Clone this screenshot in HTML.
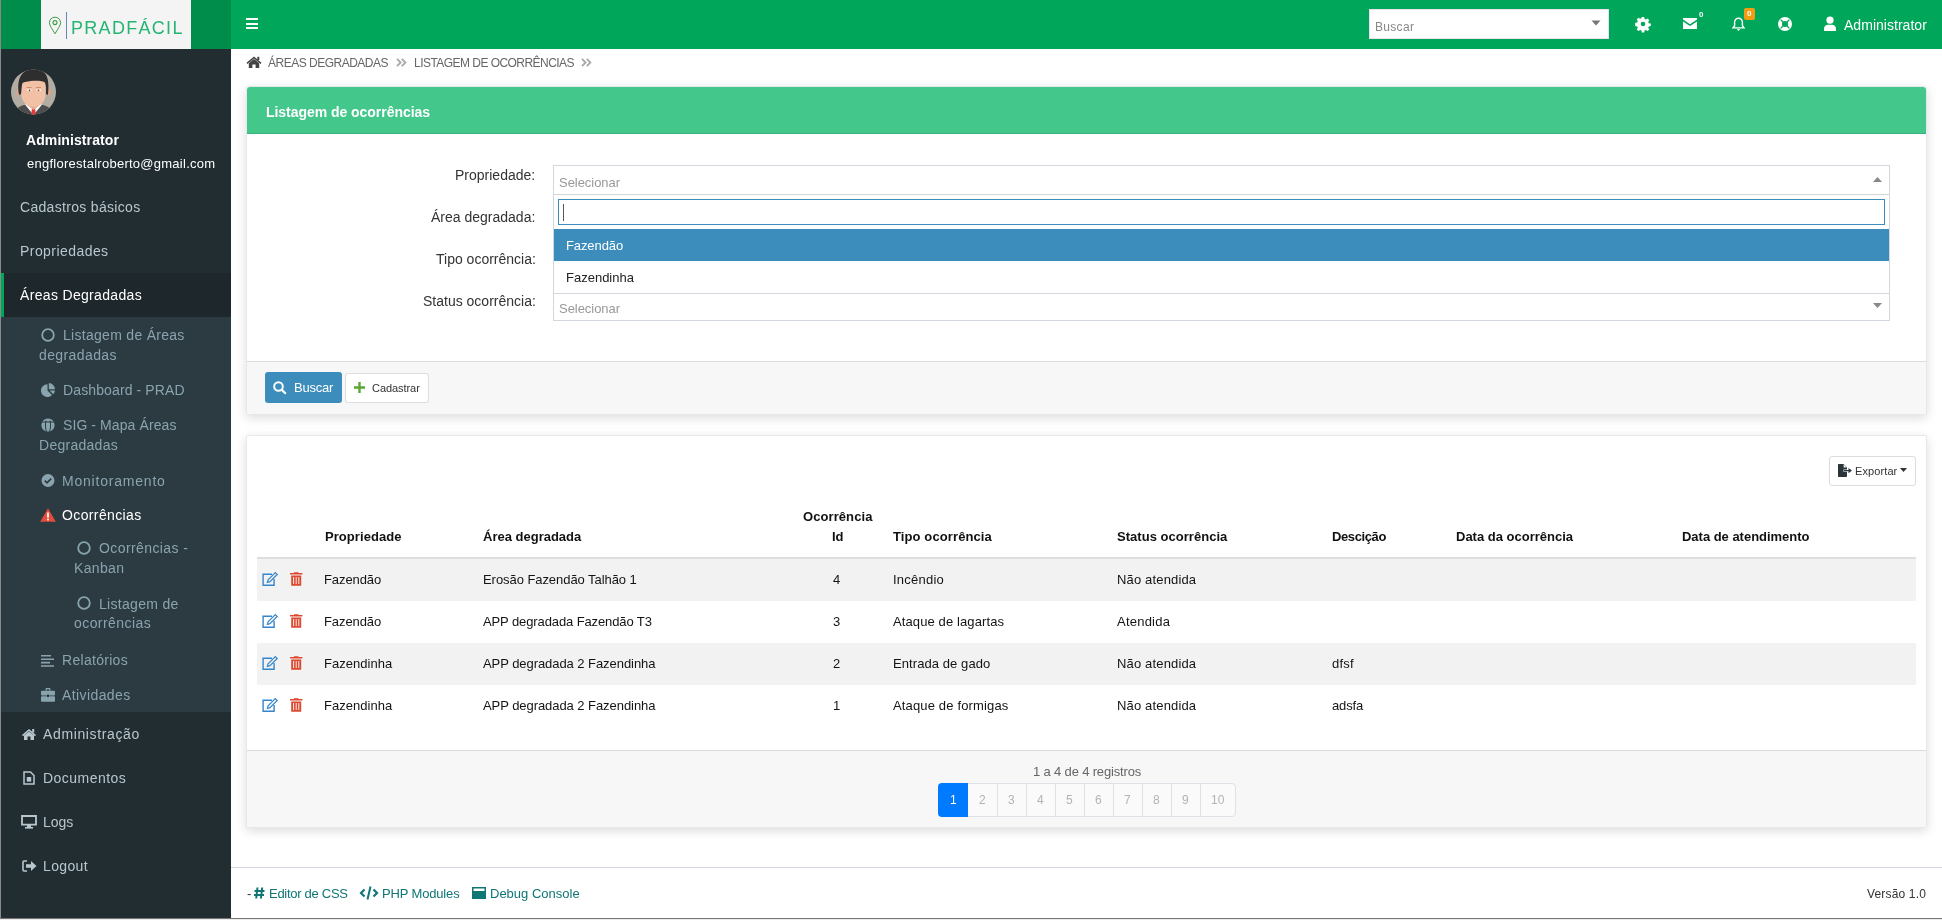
<!DOCTYPE html>
<html><head><meta charset="utf-8">
<style>
*{box-sizing:border-box;margin:0;padding:0}
html,body{width:1942px;height:920px;overflow:hidden;background:#fff;font-family:"Liberation Sans",sans-serif;position:relative}
.a{position:absolute;white-space:nowrap;line-height:1;will-change:transform}
.r{position:absolute}
svg{position:absolute;overflow:visible}
</style></head><body>
<!-- header -->
<div class="r" style="left:1px;top:0;width:230px;height:49px;background:#008d4c"></div>
<div class="r" style="left:41px;top:0;width:150px;height:49px;background:#f4f4f4"></div>
<div class="r" style="left:231px;top:0;width:1711px;height:49px;background:#00a65a"></div>
<!-- logo -->
<svg style="left:48px;top:16px" width="14" height="19" viewBox="0 0 14 19"><path d="M7 1.2C3.8 1.2 1.4 3.6 1.4 6.6c0 3.2 3 6.4 5.6 11.2C9.6 13 12.6 9.8 12.6 6.6 12.6 3.6 10.2 1.2 7 1.2z" fill="none" stroke="#3d9e45" stroke-width="1"/><circle cx="7" cy="6.6" r="2" fill="none" stroke="#3d9e45" stroke-width="1.1"/></svg>
<div class="r" style="left:65.5px;top:12px;width:1px;height:27px;background:#6a86b4"></div>
<div class="a" style="left:71px;top:18.5px;font-size:18px;letter-spacing:1.3px;color:#25b472">PRADFÁCIL</div>
<!-- hamburger -->
<div class="r" style="left:246px;top:18px;width:12px;height:2px;background:#fff"></div>
<div class="r" style="left:246px;top:23px;width:12px;height:2px;background:#fff"></div>
<div class="r" style="left:246px;top:27px;width:12px;height:2px;background:#fff"></div>
<!-- search -->
<div class="r" style="left:1369px;top:9px;width:240px;height:30px;background:#fff;border:1px solid #e8e0ee"></div>
<svg style="left:1591px;top:20px" width="10" height="6" viewBox="0 0 10 6"><path d="M0.5 0.5h9L5 5.5z" fill="#777"/></svg>
<!-- header icons -->
<svg style="left:1636px;top:17px" width="14" height="14" viewBox="0 0 14 14"><path fill="#fff" d="M5.8 0h2.4l.4 2 1.3.6 1.7-1.1 1.7 1.7-1.1 1.7.6 1.3 2 .4v2.4l-2 .4-.6 1.3 1.1 1.7-1.7 1.7-1.7-1.1-1.3.6-.4 2H5.8l-.4-2-1.3-.6-1.7 1.1-1.7-1.7 1.1-1.7-.6-1.3-2-.4V5.8l2-.4.6-1.3-1.1-1.7 1.7-1.7 1.7 1.1 1.3-.6z"/><circle cx="7" cy="7" r="2.3" fill="#00a65a"/></svg>
<svg style="left:1683px;top:18px" width="14" height="11" viewBox="0 0 14 11"><path fill="#fff" d="M0 0h14v1.6L7 6.2 0 1.6z"/><path fill="#fff" d="M0 3.4l7 4.6 7-4.6V11H0z"/></svg>
<div class="a" style="left:1699px;top:11px;font-size:8px;color:#fff;font-weight:700">0</div>
<svg style="left:1732px;top:17px" width="13" height="14" viewBox="0 0 13 14"><path fill="none" stroke="#fff" stroke-width="1.4" d="M6.5 1.2c-2.4 0-3.9 1.9-3.9 4.2v3.3L1 10.9h11L10.4 8.7V5.4c0-2.3-1.5-4.2-3.9-4.2z"/><path fill="#fff" d="M4.8 12h3.4l-1.7 2z"/></svg>
<div class="r" style="left:1744px;top:8px;width:11px;height:12px;background:#f39c12;border-radius:2px"></div>
<div class="a" style="left:1747px;top:10px;font-size:8px;color:#fff;font-weight:700">0</div>
<svg style="left:1778px;top:17px" width="14" height="14" viewBox="0 0 14 14"><circle cx="7" cy="7" r="7" fill="#fff"/><circle cx="7" cy="7" r="3" fill="#00a65a"/><path d="M2.6 2.6l2.6 2.6M11.4 2.6L8.8 5.2M2.6 11.4l2.6-2.6M11.4 11.4L8.8 8.8" stroke="#00a65a" stroke-width="1.3"/></svg>
<svg style="left:1823px;top:16px" width="14" height="15" viewBox="0 0 14 15"><circle cx="7" cy="4.2" r="3.6" fill="#fff"/><path fill="#fff" d="M1 15v-2.5C1 10.3 3 8.8 5 8.8h4c2 0 4 1.5 4 3.7V15z"/></svg>

<!-- sidebar -->
<div class="r" style="left:1px;top:49px;width:230px;height:869px;background:#222d32"></div>
<div class="r" style="left:1px;top:273px;width:230px;height:44px;background:#1e282c"></div>
<div class="r" style="left:1px;top:273px;width:3px;height:44px;background:#00a65a"></div>
<div class="r" style="left:1px;top:317px;width:230px;height:395px;background:#2c3b41"></div>
<!-- avatar -->
<svg style="left:11px;top:69px" width="45" height="46" viewBox="0 0 45 46">
<defs><clipPath id="av"><circle cx="22.5" cy="23" r="22.5"/></clipPath></defs>
<g clip-path="url(#av)">
<rect width="45" height="46" fill="#b3aca3"/>
<path d="M3 46c1-6 5-9 10-10h19c5 1 9 4 10 10z" fill="#4d4d4d"/>
<path d="M14 35.5h17l-8.5 10.5z" fill="#fff"/>
<path d="M20.8 40h3.4l.6 6h-4.6z" fill="#e53935"/>
<path d="M16 30v6l6.5 5 6.5-5v-6z" fill="#e3a98c"/>
<ellipse cx="7.8" cy="23" rx="2" ry="3.4" fill="#e8a888"/><ellipse cx="37.2" cy="23" rx="2" ry="3.4" fill="#e8a888"/>
<path d="M10.5 16c0-6 5-8.5 12-8.5s12 2.5 12 8.5v10c0 7-6 12-12 12s-12-5-12-12z" fill="#f2c0a4"/>
<path d="M8 26c-1.5-9-1-17 4-22 3-3 7-4 11-4 5 0 9 1.5 11.5 5 3 4 3.5 12 2.5 21l-2-1c0-5 .5-9-1.5-12-4-1.5-9-1.5-14-1-3 .5-6 1-8 2-1 3-1 7-1.5 11z" fill="#2e2e2e"/>
<path d="M15.5 18.5h5M25 18.5h5" stroke="#d08a6a" stroke-width="1"/>
<path d="M16 21.3h4.5M25.5 21.3h4.5" stroke="#fff" stroke-width="1.6"/>
<circle cx="18.5" cy="21.3" r="0.9" fill="#6a4a30"/><circle cx="27.5" cy="21.3" r="0.9" fill="#6a4a30"/>
</g></svg>
<!-- sidebar icons -->
<svg style="left:41px;top:328px" width="14" height="14" viewBox="0 0 14 14"><circle cx="7" cy="7" r="5.8" fill="none" stroke="#8aa4af" stroke-width="1.8"/></svg>
<svg style="left:41px;top:383px" width="15" height="14" viewBox="0 0 15 14"><path fill="#8aa4af" d="M6.5 7.5V1.2A6.4 6.4 0 1 0 11 12z"/><path fill="#8aa4af" d="M7.8 6.3V0A6.4 6.4 0 0 1 14 6.3z"/><path fill="#8aa4af" d="M8.6 7.6H14a6.4 6.4 0 0 1-1.7 3.7z"/></svg>
<svg style="left:41px;top:418px" width="14" height="14" viewBox="0 0 14 14"><circle cx="7" cy="7" r="6.6" fill="#8aa4af"/><path d="M1 4h12M5 2.5c-.8 3-.8 8 .5 11M9 2.5c.8 3 .8 8-.5 11" stroke="#2c3b41" stroke-width="1" fill="none"/></svg>
<svg style="left:41px;top:474px" width="14" height="13" viewBox="0 0 14 13"><circle cx="7" cy="6.5" r="6.5" fill="#8aa4af"/><path d="M3.8 6.6l2.2 2.2 4.2-4.2" stroke="#2c3b41" stroke-width="1.7" fill="none"/></svg>
<svg style="left:40px;top:508px" width="16" height="14" viewBox="0 0 16 14"><path fill="#e74c3c" d="M8 0.3L15.8 13.7H0.2z"/><rect x="7.1" y="4.5" width="1.8" height="5" fill="#fff"/><rect x="7.1" y="10.6" width="1.8" height="1.8" fill="#fff"/></svg>
<svg style="left:77px;top:541px" width="14" height="14" viewBox="0 0 14 14"><circle cx="7" cy="7" r="5.8" fill="none" stroke="#8aa4af" stroke-width="1.8"/></svg>
<svg style="left:77px;top:596px" width="14" height="14" viewBox="0 0 14 14"><circle cx="7" cy="7" r="5.8" fill="none" stroke="#8aa4af" stroke-width="1.8"/></svg>
<svg style="left:41px;top:655px" width="14" height="12" viewBox="0 0 14 12"><path fill="#8aa4af" d="M0 0h10v1.6H0zM0 3.4h13v1.6H0zM0 6.8h9v1.6H0zM0 10.2h13v1.6H0z"/></svg>
<svg style="left:41px;top:688px" width="14" height="14" viewBox="0 0 14 14"><path fill="#8aa4af" d="M4.5 2.5V1.2C4.5.6 5 0 5.6 0h2.8c.6 0 1.1.6 1.1 1.2v1.3h-1.3V1.3H5.8v1.2z"/><rect x="0" y="2.8" width="14" height="4.6" rx="1" fill="#8aa4af"/><rect x="0" y="8.2" width="14" height="5.6" rx="1" fill="#8aa4af"/><rect x="6" y="6.6" width="2" height="2.4" fill="#2c3b41"/></svg>
<svg style="left:21px;top:728px" width="16" height="12" viewBox="0 0 16 12"><path fill="#b8c7ce" d="M8 1L1 7l1 1.2L8 3l6 5.2L15 7z"/><path fill="#b8c7ce" d="M3 7.5L8 3.4l5 4.1V12H9.5V8.5h-3V12H3z"/><rect x="11.2" y="1" width="2" height="3.5" fill="#b8c7ce"/></svg>
<svg style="left:23px;top:771px" width="12" height="14" viewBox="0 0 12 14"><path fill="none" stroke="#b8c7ce" stroke-width="1.5" d="M1 1h6.5L11 4.5V13H1z"/><rect x="3.8" y="6" width="4.4" height="4.6" fill="#b8c7ce"/></svg>
<svg style="left:21px;top:815px" width="16" height="14" viewBox="0 0 16 14"><path fill="none" stroke="#b8c7ce" stroke-width="1.8" d="M1 1h14v8.6H1z"/><rect x="6" y="10" width="4" height="2" fill="#b8c7ce"/><rect x="4" y="12" width="8" height="1.6" fill="#b8c7ce"/></svg>
<svg style="left:22px;top:860px" width="15" height="12" viewBox="0 0 15 12"><path fill="none" stroke="#b8c7ce" stroke-width="1.6" d="M5 1H2C1.4 1 1 1.4 1 2v8c0 .6.4 1 1 1h3"/><path fill="#b8c7ce" d="M4 4.3h5V1l5.5 5L9 11V7.7H4z"/></svg>

<!-- breadcrumb -->
<svg style="left:246px;top:56px" width="16" height="12" viewBox="0 0 16 12"><path fill="#444" d="M8 0.5L0.5 6.8l1 1.1L8 2.4l6.5 5.5 1-1.1z"/><path fill="#444" d="M2.8 7.2L8 2.9l5.2 4.3V12H9.6V8.6H6.4V12H2.8z"/><rect x="11.3" y="0.8" width="2" height="3.2" fill="#444"/></svg>
<svg style="left:396px;top:58px" width="11" height="9" viewBox="0 0 11 9"><path d="M1 0.8l3.6 3.7L1 8.2M5.8 0.8l3.6 3.7-3.6 3.7" fill="none" stroke="#aaa" stroke-width="1.9"/></svg>
<svg style="left:581px;top:58px" width="11" height="9" viewBox="0 0 11 9"><path d="M1 0.8l3.6 3.7L1 8.2M5.8 0.8l3.6 3.7-3.6 3.7" fill="none" stroke="#aaa" stroke-width="1.9"/></svg>

<!-- box 1 -->
<div class="r" style="left:246px;top:86px;width:1681px;height:329px;background:#fff;border:1px solid #e8e8e8;border-radius:2px;box-shadow:0 3px 11px rgba(0,0,0,.14)"></div>
<div class="r" style="left:247px;top:87px;width:1679px;height:47px;background:#43c78b;border-bottom:1px solid #39b27b;border-radius:3px 3px 0 0"></div>
<div class="r" style="left:247px;top:361px;width:1679px;height:53px;background:#f7f7f7;border-top:1px solid #dcdcdc;border-radius:0 0 3px 3px"></div>
<!-- select 1 + dropdown -->
<div class="r" style="left:553px;top:165px;width:1337px;height:30px;background:#fff;border:1px solid #d2d6de"></div>
<svg style="left:1873px;top:177px" width="9" height="5" viewBox="0 0 9 5"><path d="M0 5h9L4.5 0z" fill="#888"/></svg>
<div class="r" style="left:553px;top:194px;width:1337px;height:100px;background:#fff;border:1px solid #d2d6de"></div>
<div class="r" style="left:558px;top:199px;width:1327px;height:26px;background:#fff;border:1px solid #3c8dbc"></div>
<div class="r" style="left:563px;top:204px;width:1px;height:17px;background:#555"></div>
<div class="r" style="left:554px;top:229px;width:1335px;height:32px;background:#3d8dbc"></div>
<!-- select 4 -->
<div class="r" style="left:553px;top:293px;width:1337px;height:28px;background:#fff;border:1px solid #d2d6de"></div>
<svg style="left:1873px;top:303px" width="9" height="5" viewBox="0 0 9 5"><path d="M0 0h9L4.5 5z" fill="#888"/></svg>
<!-- buttons -->
<div class="r" style="left:265px;top:372px;width:77px;height:31px;background:#3c8dbc;border-radius:3px"></div>
<svg style="left:273px;top:381px" width="14" height="14" viewBox="0 0 14 14"><circle cx="5.5" cy="5.5" r="4.3" fill="none" stroke="#fff" stroke-width="2"/><path d="M8.6 8.6l4.2 4.2" stroke="#fff" stroke-width="2.2"/></svg>
<div class="r" style="left:345px;top:373px;width:84px;height:30px;background:#fff;border:1px solid #ddd;border-radius:3px"></div>
<svg style="left:354px;top:382px" width="11" height="11" viewBox="0 0 11 11"><path d="M4.3 0h2.4v4.3H11v2.4H6.7V11H4.3V6.7H0V4.3h4.3z" fill="#5aa832"/></svg>

<!-- box 2 -->
<div class="r" style="left:246px;top:435px;width:1681px;height:393px;background:#fff;border:1px solid #e8e8e8;border-radius:2px;box-shadow:0 3px 11px rgba(0,0,0,.14)"></div>
<div class="r" style="left:247px;top:750px;width:1679px;height:77px;background:#f7f7f7;border-top:1px solid #dcdcdc;border-radius:0 0 3px 3px"></div>
<div class="r" style="left:1829px;top:456px;width:87px;height:30px;background:#fff;border:1px solid #ddd;border-radius:3px"></div>
<svg style="left:1838px;top:464px" width="14" height="13" viewBox="0 0 14 13"><path fill="#2b3438" d="M0 1c0-.6.4-1 1-1h4.5L9 3.5V5.5H5.5v2.2H9V12c0 .6-.4 1-1 1H1c-.6 0-1-.4-1-1z"/><path fill="#fff" d="M5.6 0.4V3.4h3"/><path fill="#2b3438" d="M6 6h4.5V4L14 6.6 10.5 9.2V7.2H6z"/></svg>
<svg style="left:1900px;top:468px" width="7" height="4" viewBox="0 0 7 4"><path d="M0 0h7L3.5 4z" fill="#333"/></svg>
<!-- table -->
<div class="r" style="left:257px;top:557px;width:1659px;height:2px;background:#dedede"></div>
<div class="r" style="left:257px;top:559px;width:1659px;height:42px;background:#f2f2f2"></div>
<div class="r" style="left:257px;top:643px;width:1659px;height:42px;background:#f2f2f2"></div>
<!-- row icons -->
<svg style="left:262px;top:572px" width="16" height="14" viewBox="0 0 16 14"><path d="M10 2.2H1.1v11h11V7" fill="none" stroke="#3585cc" stroke-width="1.4"/><path d="M13.3.6l1.9 1.9-7.2 7.2-2.6.7.7-2.6z" fill="none" stroke="#3585cc" stroke-width="1.2"/></svg>
<svg style="left:290px;top:572px" width="13" height="14" viewBox="0 0 13 14"><path fill="#db4a30" d="M0 1.1h12.4v1.3H0zM3.9 0.2h4.6v1.4H3.9zM1.2 3.5h10v10.3h-10z"/><path d="M3.6 5v7M6.2 5v7M8.8 5v7" stroke="#fff" stroke-width="0.9"/></svg>
<svg style="left:262px;top:614px" width="16" height="14" viewBox="0 0 16 14"><path d="M10 2.2H1.1v11h11V7" fill="none" stroke="#3585cc" stroke-width="1.4"/><path d="M13.3.6l1.9 1.9-7.2 7.2-2.6.7.7-2.6z" fill="none" stroke="#3585cc" stroke-width="1.2"/></svg>
<svg style="left:290px;top:614px" width="13" height="14" viewBox="0 0 13 14"><path fill="#db4a30" d="M0 1.1h12.4v1.3H0zM3.9 0.2h4.6v1.4H3.9zM1.2 3.5h10v10.3h-10z"/><path d="M3.6 5v7M6.2 5v7M8.8 5v7" stroke="#fff" stroke-width="0.9"/></svg>
<svg style="left:262px;top:656px" width="16" height="14" viewBox="0 0 16 14"><path d="M10 2.2H1.1v11h11V7" fill="none" stroke="#3585cc" stroke-width="1.4"/><path d="M13.3.6l1.9 1.9-7.2 7.2-2.6.7.7-2.6z" fill="none" stroke="#3585cc" stroke-width="1.2"/></svg>
<svg style="left:290px;top:656px" width="13" height="14" viewBox="0 0 13 14"><path fill="#db4a30" d="M0 1.1h12.4v1.3H0zM3.9 0.2h4.6v1.4H3.9zM1.2 3.5h10v10.3h-10z"/><path d="M3.6 5v7M6.2 5v7M8.8 5v7" stroke="#fff" stroke-width="0.9"/></svg>
<svg style="left:262px;top:698px" width="16" height="14" viewBox="0 0 16 14"><path d="M10 2.2H1.1v11h11V7" fill="none" stroke="#3585cc" stroke-width="1.4"/><path d="M13.3.6l1.9 1.9-7.2 7.2-2.6.7.7-2.6z" fill="none" stroke="#3585cc" stroke-width="1.2"/></svg>
<svg style="left:290px;top:698px" width="13" height="14" viewBox="0 0 13 14"><path fill="#db4a30" d="M0 1.1h12.4v1.3H0zM3.9 0.2h4.6v1.4H3.9zM1.2 3.5h10v10.3h-10z"/><path d="M3.6 5v7M6.2 5v7M8.8 5v7" stroke="#fff" stroke-width="0.9"/></svg>
<!-- pagination -->
<div class="r" style="left:938px;top:783px;width:298px;height:34px;background:#fafafa;border:1px solid #dee2e6;border-radius:4px"></div>
<div class="r" style="left:938px;top:783px;width:30px;height:34px;background:#007bff;border-radius:4px 0 0 4px"></div>
<div class="r" style="left:996.5px;top:784px;width:1px;height:32px;background:#dee2e6"></div><div class="r" style="left:1025.5px;top:784px;width:1px;height:32px;background:#dee2e6"></div><div class="r" style="left:1054.5px;top:784px;width:1px;height:32px;background:#dee2e6"></div><div class="r" style="left:1083.5px;top:784px;width:1px;height:32px;background:#dee2e6"></div><div class="r" style="left:1112.5px;top:784px;width:1px;height:32px;background:#dee2e6"></div><div class="r" style="left:1141.5px;top:784px;width:1px;height:32px;background:#dee2e6"></div><div class="r" style="left:1170.5px;top:784px;width:1px;height:32px;background:#dee2e6"></div><div class="r" style="left:1199.5px;top:784px;width:1px;height:32px;background:#dee2e6"></div>

<!-- footer -->
<div class="r" style="left:231px;top:867px;width:1711px;height:1px;background:#d2d6de"></div>
<svg style="left:254px;top:887px" width="11" height="12" viewBox="0 0 11 12"><path d="M3.5 0.5L2.2 11.5M8.2 0.5L6.9 11.5M0.5 4h10M0 8h10" stroke="#107575" stroke-width="2"/></svg>
<svg style="left:360px;top:886px" width="18" height="14" viewBox="0 0 18 14"><path d="M4.5 3.5L1 7l3.5 3.5M13.5 3.5L17 7l-3.5 3.5" fill="none" stroke="#107575" stroke-width="2.2"/><path d="M10.5 0.5L7.5 13.5" stroke="#107575" stroke-width="2"/></svg>
<svg style="left:472px;top:887px" width="14" height="12" viewBox="0 0 14 12"><rect x="0" y="0" width="14" height="12" fill="#107575"/><rect x="1.5" y="1.5" width="11" height="2.5" fill="#fff"/></svg>

<div class="a" style="left:26.0px;top:133.1px;font-size:14px;color:#fff;font-weight:700;letter-spacing:0.09px;">Administrator</div>
<div class="a" style="left:26.5px;top:157.0px;font-size:13px;color:#fff;letter-spacing:0.26px;">engflorestalroberto@gmail.com</div>
<div class="a" style="left:19.5px;top:200.1px;font-size:14px;color:#b8c7ce;letter-spacing:0.31px;">Cadastros básicos</div>
<div class="a" style="left:19.5px;top:243.5px;font-size:14px;color:#b8c7ce;letter-spacing:0.44px;">Propriedades</div>
<div class="a" style="left:19.5px;top:288.1px;font-size:14px;color:#fff;letter-spacing:0.33px;">Áreas Degradadas</div>
<div class="a" style="left:62.6px;top:328.1px;font-size:14px;color:#8aa4af;letter-spacing:0.29px;">Listagem de Áreas</div>
<div class="a" style="left:39.0px;top:348.1px;font-size:14px;color:#8aa4af;letter-spacing:0.40px;">degradadas</div>
<div class="a" style="left:62.6px;top:382.7px;font-size:14px;color:#8aa4af;letter-spacing:0.12px;">Dashboard - PRAD</div>
<div class="a" style="left:62.6px;top:417.9px;font-size:14px;color:#8aa4af;letter-spacing:0.09px;">SIG - Mapa Áreas</div>
<div class="a" style="left:39.0px;top:437.9px;font-size:14px;color:#8aa4af;letter-spacing:0.27px;">Degradadas</div>
<div class="a" style="left:62.4px;top:473.5px;font-size:14px;color:#8aa4af;letter-spacing:0.79px;">Monitoramento</div>
<div class="a" style="left:62.4px;top:508.1px;font-size:14px;color:#fff;letter-spacing:0.38px;">Ocorrências</div>
<div class="a" style="left:98.6px;top:541.4px;font-size:14px;color:#8aa4af;letter-spacing:0.41px;">Ocorrências -</div>
<div class="a" style="left:74.3px;top:561.1px;font-size:14px;color:#8aa4af;letter-spacing:0.34px;">Kanban</div>
<div class="a" style="left:98.6px;top:596.5px;font-size:14px;color:#8aa4af;letter-spacing:0.31px;">Listagem de</div>
<div class="a" style="left:74.3px;top:616.1px;font-size:14px;color:#8aa4af;letter-spacing:0.43px;">ocorrências</div>
<div class="a" style="left:62.4px;top:653.1px;font-size:14px;color:#8aa4af;letter-spacing:0.29px;">Relatórios</div>
<div class="a" style="left:62.4px;top:688.1px;font-size:14px;color:#8aa4af;letter-spacing:0.40px;">Atividades</div>
<div class="a" style="left:43.0px;top:727.1px;font-size:14px;color:#b8c7ce;letter-spacing:0.63px;">Administração</div>
<div class="a" style="left:43.0px;top:771.3px;font-size:14px;color:#b8c7ce;letter-spacing:0.46px;">Documentos</div>
<div class="a" style="left:43.0px;top:814.8px;font-size:14px;color:#b8c7ce;">Logs</div>
<div class="a" style="left:43.0px;top:859.1px;font-size:14px;color:#b8c7ce;letter-spacing:0.36px;">Logout</div>
<div class="a" style="left:1374.8px;top:20.6px;font-size:12px;color:#888;letter-spacing:0.31px;">Buscar</div>
<div class="a" style="left:1843.7px;top:17.6px;font-size:14px;color:#fff;letter-spacing:0.03px;">Administrator</div>
<div class="a" style="left:268.0px;top:57.4px;font-size:12px;color:#666;letter-spacing:-0.50px;">ÁREAS DEGRADADAS</div>
<div class="a" style="left:413.5px;top:57.4px;font-size:12px;color:#666;letter-spacing:-0.54px;">LISTAGEM DE OCORRÊNCIAS</div>
<div class="a" style="left:265.7px;top:105.3px;font-size:14px;color:#fff;font-weight:700;letter-spacing:-0.04px;">Listagem de ocorrências</div>
<div class="a" style="left:455.3px;top:168.1px;font-size:14px;color:#333;">Propriedade:</div>
<div class="a" style="left:431.2px;top:210.1px;font-size:14px;color:#333;">Área degradada:</div>
<div class="a" style="left:435.6px;top:252.1px;font-size:14px;color:#333;">Tipo ocorrência:</div>
<div class="a" style="left:422.7px;top:294.1px;font-size:14px;color:#333;">Status ocorrência:</div>
<div class="a" style="left:558.6px;top:176.0px;font-size:13px;color:#999;letter-spacing:-0.04px;">Selecionar</div>
<div class="a" style="left:558.6px;top:301.5px;font-size:13px;color:#999;letter-spacing:-0.04px;">Selecionar</div>
<div class="a" style="left:566.4px;top:239.0px;font-size:13px;color:#fff;letter-spacing:-0.10px;">Fazendão</div>
<div class="a" style="left:566.4px;top:270.7px;font-size:13px;color:#222;">Fazendinha</div>
<div class="a" style="left:293.6px;top:380.8px;font-size:13px;color:#fff;letter-spacing:-0.24px;">Buscar</div>
<div class="a" style="left:371.9px;top:382.5px;font-size:11px;color:#333;letter-spacing:-0.06px;">Cadastrar</div>
<div class="a" style="left:1854.6px;top:465.6px;font-size:11px;color:#333;letter-spacing:0.10px;">Exportar</div>
<div class="a" style="left:324.5px;top:530.0px;font-size:13px;color:#111;font-weight:700;letter-spacing:0.06px;">Propriedade</div>
<div class="a" style="left:483.4px;top:530.0px;font-size:13px;color:#111;font-weight:700;">Área degradada</div>
<div class="a" style="left:802.6px;top:510.0px;font-size:13px;color:#111;font-weight:700;letter-spacing:0.08px;">Ocorrência</div>
<div class="a" style="left:831.6px;top:530.0px;font-size:13px;color:#111;font-weight:700;">Id</div>
<div class="a" style="left:893.0px;top:530.0px;font-size:13px;color:#111;font-weight:700;letter-spacing:0.11px;">Tipo ocorrência</div>
<div class="a" style="left:1116.7px;top:530.0px;font-size:13px;color:#111;font-weight:700;letter-spacing:0.03px;">Status ocorrência</div>
<div class="a" style="left:1332.0px;top:530.0px;font-size:13px;color:#111;font-weight:700;letter-spacing:-0.39px;">Descição</div>
<div class="a" style="left:1456.3px;top:530.0px;font-size:13px;color:#111;font-weight:700;">Data da ocorrência</div>
<div class="a" style="left:1682.0px;top:530.0px;font-size:13px;color:#111;font-weight:700;letter-spacing:-0.02px;">Data de atendimento</div>
<div class="a" style="left:324.1px;top:573.0px;font-size:13px;color:#141414;letter-spacing:-0.09px;">Fazendão</div>
<div class="a" style="left:483.1px;top:573.0px;font-size:13px;color:#141414;letter-spacing:-0.06px;">Erosão Fazendão Talhão 1</div>
<div class="a" style="left:832.9px;top:573.0px;font-size:13px;color:#141414;">4</div>
<div class="a" style="left:893.0px;top:573.0px;font-size:13px;color:#141414;letter-spacing:0.23px;">Incêndio</div>
<div class="a" style="left:1116.9px;top:573.0px;font-size:13px;color:#141414;letter-spacing:0.16px;">Não atendida</div>
<div class="a" style="left:324.1px;top:615.0px;font-size:13px;color:#141414;letter-spacing:-0.09px;">Fazendão</div>
<div class="a" style="left:483.1px;top:615.0px;font-size:13px;color:#141414;letter-spacing:-0.11px;">APP degradada Fazendão T3</div>
<div class="a" style="left:832.9px;top:615.0px;font-size:13px;color:#141414;">3</div>
<div class="a" style="left:893.0px;top:615.0px;font-size:13px;color:#141414;letter-spacing:0.11px;">Ataque de lagartas</div>
<div class="a" style="left:1116.9px;top:615.0px;font-size:13px;color:#141414;letter-spacing:0.23px;">Atendida</div>
<div class="a" style="left:324.1px;top:657.0px;font-size:13px;color:#141414;letter-spacing:0.02px;">Fazendinha</div>
<div class="a" style="left:483.1px;top:657.0px;font-size:13px;color:#141414;letter-spacing:-0.06px;">APP degradada 2 Fazendinha</div>
<div class="a" style="left:832.9px;top:657.0px;font-size:13px;color:#141414;">2</div>
<div class="a" style="left:893.0px;top:657.0px;font-size:13px;color:#141414;letter-spacing:0.08px;">Entrada de gado</div>
<div class="a" style="left:1116.9px;top:657.0px;font-size:13px;color:#141414;letter-spacing:0.16px;">Não atendida</div>
<div class="a" style="left:1332.0px;top:657.0px;font-size:13px;color:#141414;letter-spacing:0.23px;">dfsf</div>
<div class="a" style="left:324.1px;top:699.0px;font-size:13px;color:#141414;letter-spacing:0.02px;">Fazendinha</div>
<div class="a" style="left:483.1px;top:699.0px;font-size:13px;color:#141414;letter-spacing:-0.06px;">APP degradada 2 Fazendinha</div>
<div class="a" style="left:832.9px;top:699.0px;font-size:13px;color:#141414;">1</div>
<div class="a" style="left:893.0px;top:699.0px;font-size:13px;color:#141414;letter-spacing:0.15px;">Ataque de formigas</div>
<div class="a" style="left:1116.9px;top:699.0px;font-size:13px;color:#141414;letter-spacing:0.16px;">Não atendida</div>
<div class="a" style="left:1332.0px;top:699.0px;font-size:13px;color:#141414;letter-spacing:-0.12px;">adsfa</div>
<div class="a" style="left:949.7px;top:793.8px;font-size:12px;color:#fff;">1</div>
<div class="a" style="left:978.7px;top:793.8px;font-size:12px;color:#b3b3b3;">2</div>
<div class="a" style="left:1007.7px;top:793.8px;font-size:12px;color:#b3b3b3;">3</div>
<div class="a" style="left:1036.7px;top:793.8px;font-size:12px;color:#b3b3b3;">4</div>
<div class="a" style="left:1065.7px;top:793.8px;font-size:12px;color:#b3b3b3;">5</div>
<div class="a" style="left:1094.7px;top:793.8px;font-size:12px;color:#b3b3b3;">6</div>
<div class="a" style="left:1123.7px;top:793.8px;font-size:12px;color:#b3b3b3;">7</div>
<div class="a" style="left:1152.7px;top:793.8px;font-size:12px;color:#b3b3b3;">8</div>
<div class="a" style="left:1181.7px;top:793.8px;font-size:12px;color:#b3b3b3;">9</div>
<div class="a" style="left:1210.8px;top:793.8px;font-size:12px;color:#b3b3b3;">10</div>
<div class="a" style="left:1033.0px;top:765.0px;font-size:13px;color:#666;letter-spacing:-0.16px;">1 a 4 de 4 registros</div>
<div class="a" style="left:247.0px;top:887.0px;font-size:13px;color:#333;">-</div>
<div class="a" style="left:269.3px;top:887.0px;font-size:13px;color:#107575;letter-spacing:-0.28px;">Editor de CSS</div>
<div class="a" style="left:381.9px;top:887.0px;font-size:13px;color:#107575;letter-spacing:-0.16px;">PHP Modules</div>
<div class="a" style="left:489.7px;top:887.0px;font-size:13px;color:#107575;">Debug Console</div>
<div class="a" style="left:1867.1px;top:887.5px;font-size:12px;color:#333;letter-spacing:0.16px;">Versão 1.0</div>

<!-- frame -->
<div class="r" style="left:0;top:0;width:1px;height:920px;background:#8a8a8a"></div>
<div class="r" style="left:0;top:918px;width:1942px;height:1px;background:#777"></div><div class="r" style="left:0;top:919px;width:1942px;height:1px;background:#ebebeb"></div>
</body></html>
